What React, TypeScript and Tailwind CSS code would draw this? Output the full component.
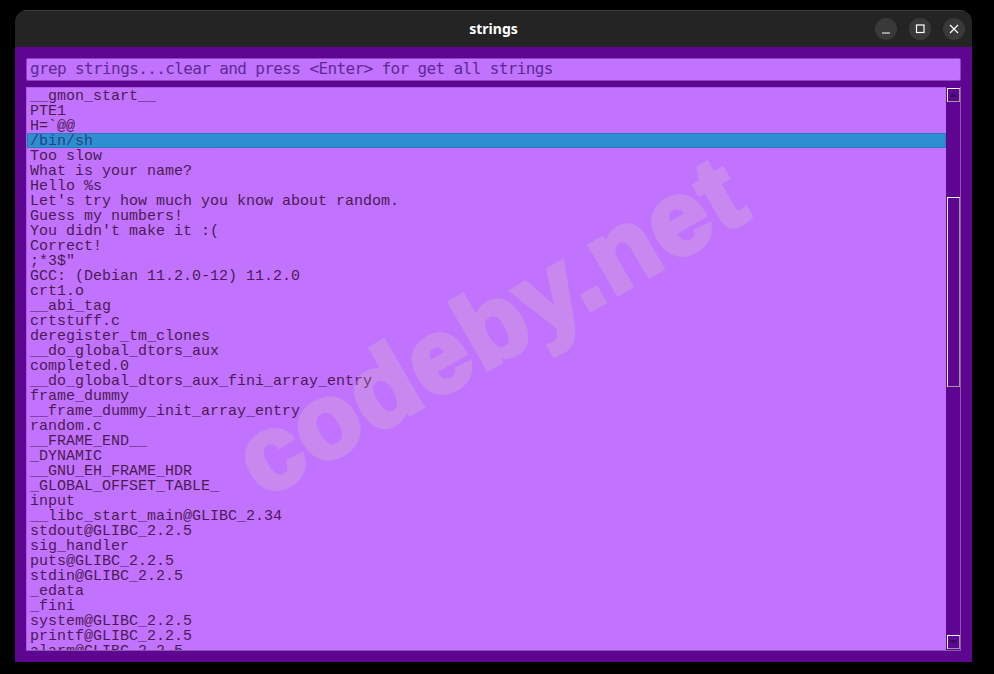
import React from "react";

const lines = [
  "__gmon_start__", "PTE1", "H=`@@", "/bin/sh", "Too slow", "What is your name?", "Hello %s",
  "Let's try how much you know about random.", "Guess my numbers!", "You didn't make it :(", "Correct!",
  ';*3$"', "GCC: (Debian 11.2.0-12) 11.2.0", "crt1.o", "__abi_tag", "crtstuff.c", "deregister_tm_clones",
  "__do_global_dtors_aux", "completed.0", "__do_global_dtors_aux_fini_array_entry", "frame_dummy",
  "__frame_dummy_init_array_entry", "random.c", "__FRAME_END__", "_DYNAMIC", "__GNU_EH_FRAME_HDR",
  "_GLOBAL_OFFSET_TABLE_", "input", "__libc_start_main@GLIBC_2.34", "stdout@GLIBC_2.2.5", "sig_handler",
  "puts@GLIBC_2.2.5", "stdin@GLIBC_2.2.5", "_edata", "_fini", "system@GLIBC_2.2.5", "printf@GLIBC_2.2.5",
  "alarm@GLIBC_2.2.5",
];

function WinButton({ children }: { children: React.ReactNode }) {
  return (
    <div className="flex h-[22px] w-[22px] items-center justify-center rounded-full bg-[#393939]">
      <svg width="22" height="22" viewBox="0 0 22 22" fill="none" stroke="#ffffff" strokeWidth="1.2">
        {children}
      </svg>
    </div>
  );
}

function ScrollButton({ up }: { up: boolean }) {
  return (
    <div className="flex h-[14px] w-[13px] shrink-0 items-center justify-center border border-t-white border-l-white border-r-[#9a9a9a] border-b-[#9a9a9a] bg-[#5e0691]">
      <svg width="7" height="4" viewBox="0 0 7 4">
        <path d={up ? "M3.5 0 L7 4 H0 Z" : "M0 0 H7 L3.5 4 Z"} fill="#2a1150" />
      </svg>
    </div>
  );
}

export default function App() {
  return (
    <div className="h-[674px] w-[994px] overflow-hidden bg-black pl-[15px] pt-[10px]">
      <div className="flex h-[652px] w-[957px] flex-col overflow-hidden rounded-t-[12px]">
        <div className="relative flex h-[37px] shrink-0 items-center justify-end gap-3 border-t border-[#3a3a3a] bg-[#242424] pr-[7px]">
          <div className="absolute inset-x-0 top-[8px] text-center font-['Noto_Sans',sans-serif] text-[14px] leading-[20px] font-bold text-white">
            strings
          </div>
          <WinButton>
            <path d="M7 15 H15" />
          </WinButton>
          <WinButton>
            <rect x="7.5" y="7" width="7.5" height="7.5" />
          </WinButton>
          <WinButton>
            <path d="M7 7 L15 15 M15 7 L7 15" />
          </WinButton>
        </div>
        <div className="flex min-h-0 flex-1 flex-col gap-[6px] bg-[#5e0691] px-[11px] pb-[11px] pt-[11px]">
          <div className="h-[23px] w-[935px] shrink-0 rounded-[2px] border border-[#8a45b8] bg-[#c172ff] pl-[3px] font-['DejaVu_Sans_Mono',monospace] text-[16px] leading-[19px] tracking-[-0.62px] text-[#5f2a95]">
            grep strings...clear and press &lt;Enter&gt; for get all strings
          </div>
          <div className="relative flex min-h-0 w-[935px] flex-1 overflow-hidden border-b border-r border-[#8a5aa8] bg-[#c172ff]">
            <div className="min-w-0 flex-1 overflow-hidden border-l border-t border-[#a75fe0] font-['Liberation_Mono',monospace] text-[15px] leading-[17px] text-[#4e1a52]">
              {lines.map((l, i) => (
                <div key={i} className={`h-[15px] whitespace-pre pl-[3px] ${i === 3 ? "bg-[#2e8fd0] text-[#2a4088] outline outline-[#2a7ab5] -outline-offset-1" : ""}`}>
                  {l}
                </div>
              ))}
            </div>
            <div className="flex w-[14px] shrink-0 flex-col justify-between bg-[#5e0691] pb-[1px] pl-[1px] pt-[1px]">
              <ScrollButton up />
              <div className="absolute right-0 top-[110px] h-[190px] w-[13px] border border-t-white border-l-white border-r-[#9a9a9a] border-b-[#9a9a9a] bg-[#5e0691]" />
              <ScrollButton up={false} />
            </div>
            <div className="pointer-events-none absolute left-[181px] top-[186px] -rotate-[30deg] whitespace-nowrap font-['Liberation_Sans',sans-serif] text-[105px] leading-[106px] font-bold tracking-[2px] text-[#e4e0af] opacity-20 [-webkit-text-stroke:5px_#e4e0af]">
              codeby.net
            </div>
          </div>
        </div>
      </div>
    </div>
  );
}
